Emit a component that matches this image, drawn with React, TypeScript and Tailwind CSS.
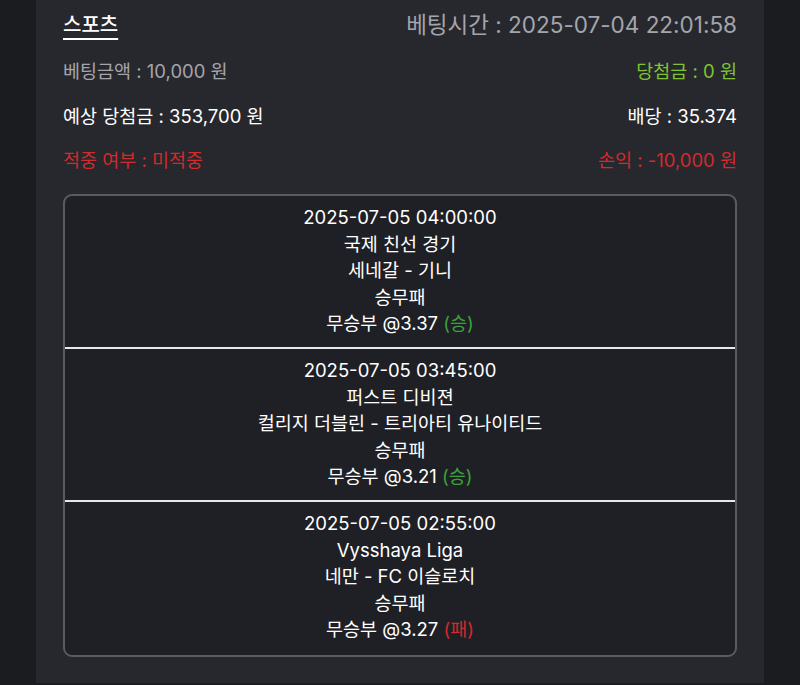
import React from 'react';

type Match = {
  time: string;
  league: string;
  teams: string;
  market: string;
  pick: string;
  odds: string;
  result: '승' | '패';
};

const matches: Match[] = [
  { time: '2025-07-05 04:00:00', league: '국제 친선 경기', teams: '세네갈 - 기니', market: '승무패', pick: '무승부', odds: '3.37', result: '승' },
  { time: '2025-07-05 03:45:00', league: '퍼스트 디비젼', teams: '컬리지 더블린 - 트리아티 유나이티드', market: '승무패', pick: '무승부', odds: '3.21', result: '승' },
  { time: '2025-07-05 02:55:00', league: 'Vysshaya Liga', teams: '네만 - FC 이슬로치', market: '승무패', pick: '무승부', odds: '3.27', result: '패' },
];

const font = { fontFamily: 'Inter, "Noto Sans CJK KR", sans-serif' };

export default function App() {
  return (
    <div className="w-[800px] h-[685px] bg-[#1b1c20] flex justify-center overflow-hidden" style={font}>
      <div className="w-[728px] h-[683px] bg-[#27282e] px-[27px] pt-[9px]">
        <div className="flex justify-between items-center h-[32px]">
          <span className="text-white text-[20px] font-medium underline underline-offset-[6px] decoration-[1.5px]">스포츠</span>
          <span className="text-[#a4a5ab] text-[22.5px]">베팅시간 : 2025-07-04 22:01:58</span>
        </div>
        <div className="flex justify-between items-center h-[26px] mt-[18px] text-[18.5px]">
          <span className="text-[#a4a5ab]">베팅금액 : 10,000 원</span>
          <span className="text-[#7ec331]">당첨금 : 0 원</span>
        </div>
        <div className="flex justify-between items-center h-[26px] mt-[19px] text-[18.5px] text-white">
          <span>예상 당첨금 : 353,700 원</span>
          <span>배당 : 35.374</span>
        </div>
        <div className="flex justify-between items-center h-[26px] mt-[18px] text-[18.5px] text-[#d12b2b]">
          <span>적중 여부 : 미적중</span>
          <span>손익 : -10,000 원</span>
        </div>
        <div className="mt-[20px] border-2 border-[#5a5b60] rounded-[9px] bg-[#1f2025] overflow-hidden">
          {matches.map((m, i) => (
            <div
              key={i}
              className={`flex flex-col items-center text-white text-[18.5px] leading-[26.5px] pt-[8px] pb-[10px] h-[153px] ${i < matches.length - 1 ? 'border-b-2 border-[#e8e8e8]' : ''}`}
            >
              <div>{m.time}</div>
              <div>{m.league}</div>
              <div>{m.teams}</div>
              <div>{m.market}</div>
              <div>
                {m.pick} @{m.odds}{' '}
                <span className={m.result === '승' ? 'text-[#3aa33a]' : 'text-[#d12b2b]'}>({m.result})</span>
              </div>
            </div>
          ))}
        </div>
      </div>
    </div>
  );
}
